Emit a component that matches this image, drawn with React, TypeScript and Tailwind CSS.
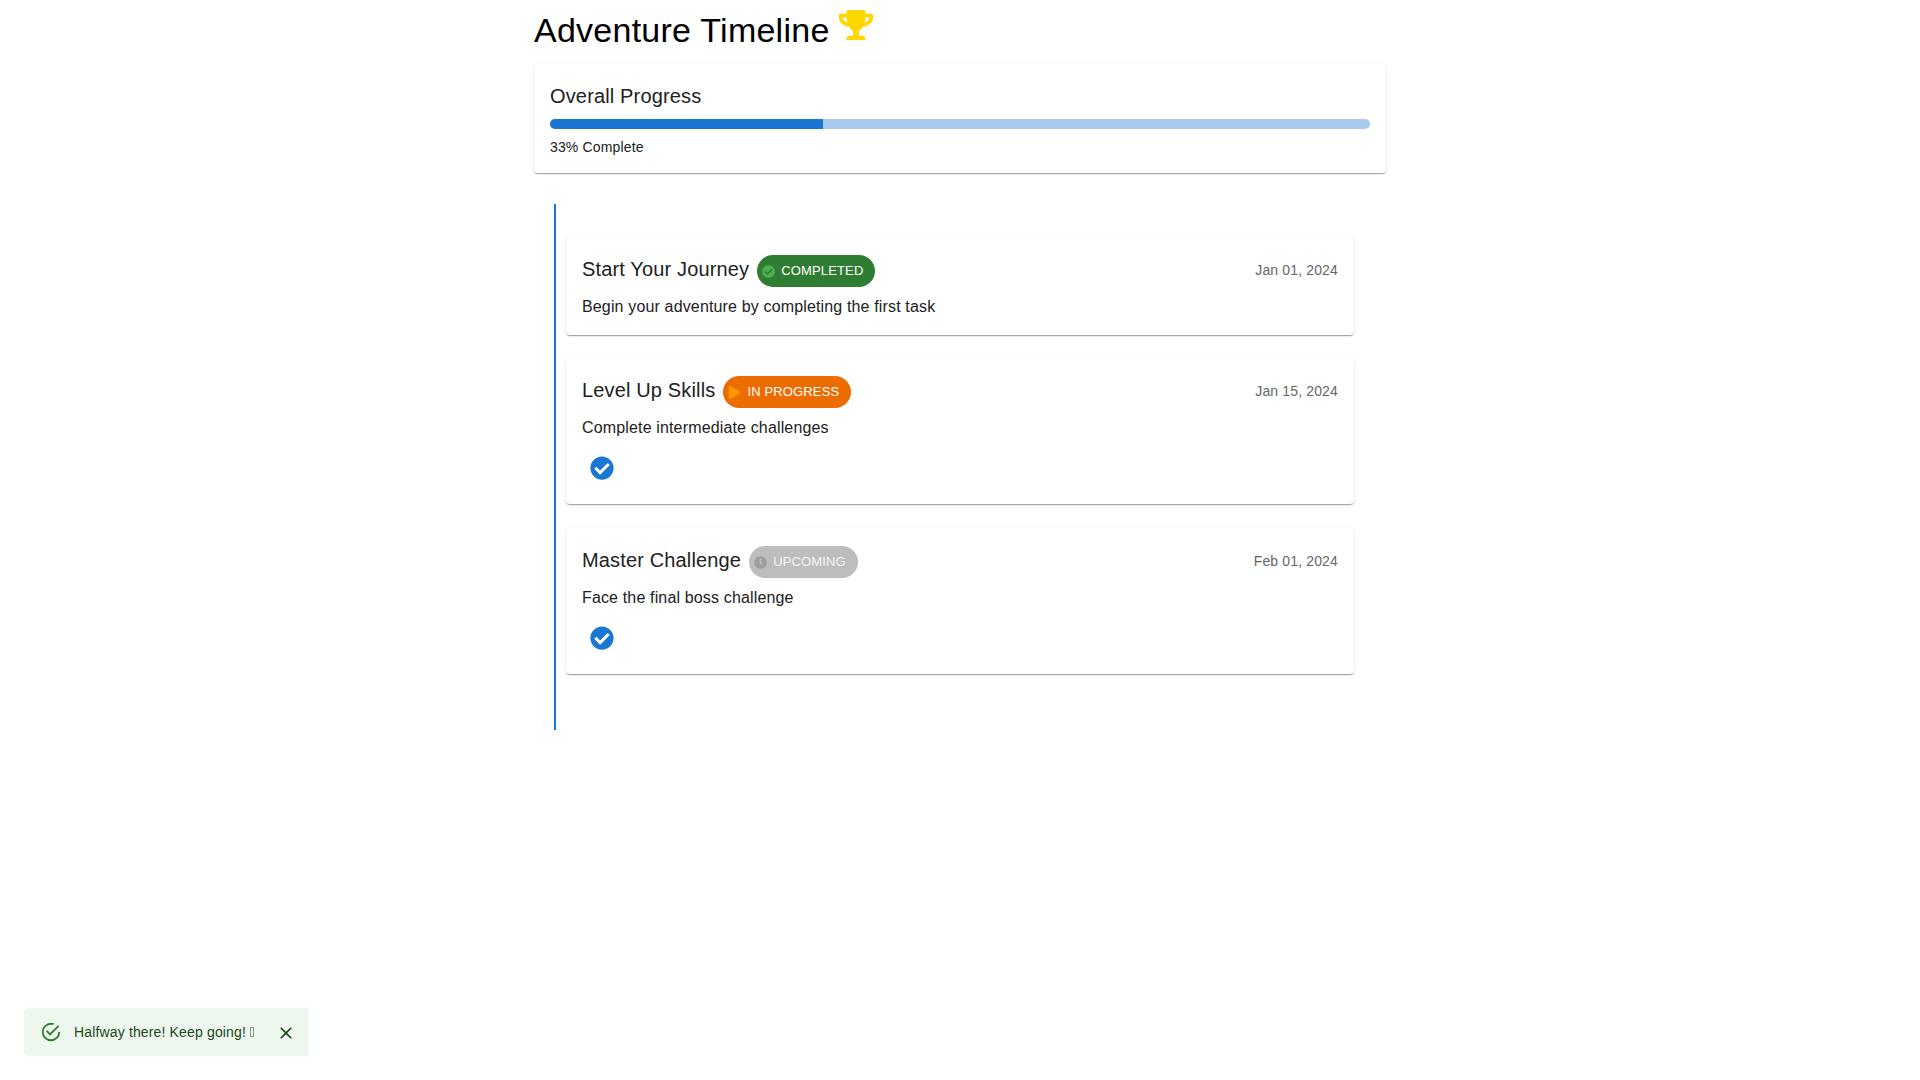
import { ReactNode } from "react";
import { FaCheckCircle, FaClock, FaPlay, FaTrophy } from "react-icons/fa";

const SUCCESS = "M20,12A8,8 0 0,1 12,20A8,8 0 0,1 4,12A8,8 0 0,1 12,4C12.76,4 13.5,4.11 14.2,4.31L15.77,2.74C14.61,2.26 13.34,2 12,2A10,10 0 0,0 2,12A10,10 0 0,0 12,22A10,10 0 0,0 22,12M7.91,10.08L6.5,11.5L11,16L21,6L19.59,4.58L11,13.17L7.91,10.08Z";
const CLOSE = "M19 6.41 17.59 5 12 10.59 6.41 5 5 6.41 10.59 12 5 17.59 6.41 19 12 13.41 17.59 19 19 17.59 13.41 12z";

function Icon({ d, className }: { d: string; className: string }) {
  return (
    <svg viewBox="0 0 24 24" fill="currentColor" className={className}>
      <path d={d} />
    </svg>
  );
}

const paper = "rounded bg-white shadow-[0px_2px_1px_-1px_rgba(0,0,0,0.2),0px_1px_1px_0px_rgba(0,0,0,0.14),0px_1px_3px_0px_rgba(0,0,0,0.12)]";
const chipIcon = "ml-[5px] -mr-[6px] h-[13px] w-[13px]";

function Chip({ label, icon, className }: { label: string; icon: ReactNode; className: string }) {
  return (
    <span className={`ml-2 mt-[2px] inline-flex h-8 items-center rounded-2xl text-[13px] tracking-[0.01071em] ${className}`}>
      {icon}
      <span className="px-3">{label}</span>
    </span>
  );
}

const milestones = [
  {
    title: "Start Your Journey",
    date: "Jan 01, 2024",
    text: "Begin your adventure by completing the first task",
    action: false,
    chip: (
      <Chip
        label="COMPLETED"
        className="bg-[#2e7d32] text-white"
        icon={<FaCheckCircle className={`${chipIcon} text-[#4caf50]`} />}
      />
    ),
  },
  {
    title: "Level Up Skills",
    date: "Jan 15, 2024",
    text: "Complete intermediate challenges",
    action: true,
    chip: (
      <Chip
        label="IN PROGRESS"
        className="bg-[#ed6c02] text-white"
        icon={<FaPlay className={`${chipIcon} text-[#ff9800]`} />}
      />
    ),
  },
  {
    title: "Master Challenge",
    date: "Feb 01, 2024",
    text: "Face the final boss challenge",
    action: true,
    chip: (
      <Chip
        label="UPCOMING"
        className="bg-[#bdbdbd] text-white/85"
        icon={<FaClock className={`${chipIcon} text-[#9e9e9e]`} />}
      />
    ),
  },
];

export default function App() {
  return (
    <div className="min-h-screen bg-white font-['Liberation_Sans',Arial,sans-serif] text-[#212121]">
      <div className="mx-auto w-[900px] px-6">
        {/* Header */}
        <div className="flex h-[64px] items-start">
          <h1 className="mt-[9px] text-[34px] leading-[42px] tracking-[0.00735em] text-black">Adventure Timeline</h1>
          <FaTrophy className="ml-[9px] mt-2 h-[34px] w-[34px] text-[#ffd700]" />
        </div>

        {/* Overall progress */}
        <div className={`${paper} mb-[31px] p-4`}>
          <h2 className="mb-[7px] text-xl leading-8 tracking-[0.0075em]">Overall Progress</h2>
          <div className="h-[10px] overflow-hidden rounded-[5px] bg-[#a7caed]">
            <div className="h-full w-1/3 bg-[#1976d2]" />
          </div>
          <p className="mt-2 text-sm leading-5 tracking-[0.01071em]">33% Complete</p>
        </div>

        {/* Timeline */}
        <div className="ml-5 border-l-2 border-[#1976d2] pb-14 pl-[10px] pr-[32px] pt-[33px]">
          <div className="flex flex-col gap-6">
            {milestones.map((m, i) => (
              <div key={m.title} className={`${paper} p-4 ${i === 0 ? "-mb-px" : ""}`}>
                <div className="flex h-[35px] items-start justify-between">
                  <div className="flex items-start">
                    <h3 className="text-xl leading-8 tracking-[0.0075em]">{m.title}</h3>
                    {m.chip}
                  </div>
                  <span className="mt-[7px] text-sm leading-5 tracking-[0.01071em] text-[#666666]">{m.date}</span>
                </div>
                <p className="mt-[7px] text-base leading-6 tracking-[0.00938em]">{m.text}</p>
                {m.action && (
                  <button className="mt-2 flex h-10 w-10 items-center justify-center text-[#1976d2]">
                    <FaCheckCircle className="h-6 w-6" />
                  </button>
                )}
              </div>
            ))}
          </div>
        </div>
      </div>

      {/* Snackbar */}
      <div className="fixed bottom-6 left-6 flex h-12 items-center rounded bg-[#edf7ed] pl-4 pr-[9px] text-sm tracking-[0.01071em] text-[#1e4620]">
        <Icon d={SUCCESS} className="mr-3 h-[22px] w-[22px] text-[#2e7d32]" />
        <span>
          Halfway there! Keep going! <span className="inline-block h-[10px] w-[4px] border border-[#1e4620]/50" />
        </span>
        <button className="ml-[18px] mt-[2px] flex h-7 w-7 items-center justify-center">
          <Icon d={CLOSE} className="h-5 w-5" />
        </button>
      </div>
    </div>
  );
}
